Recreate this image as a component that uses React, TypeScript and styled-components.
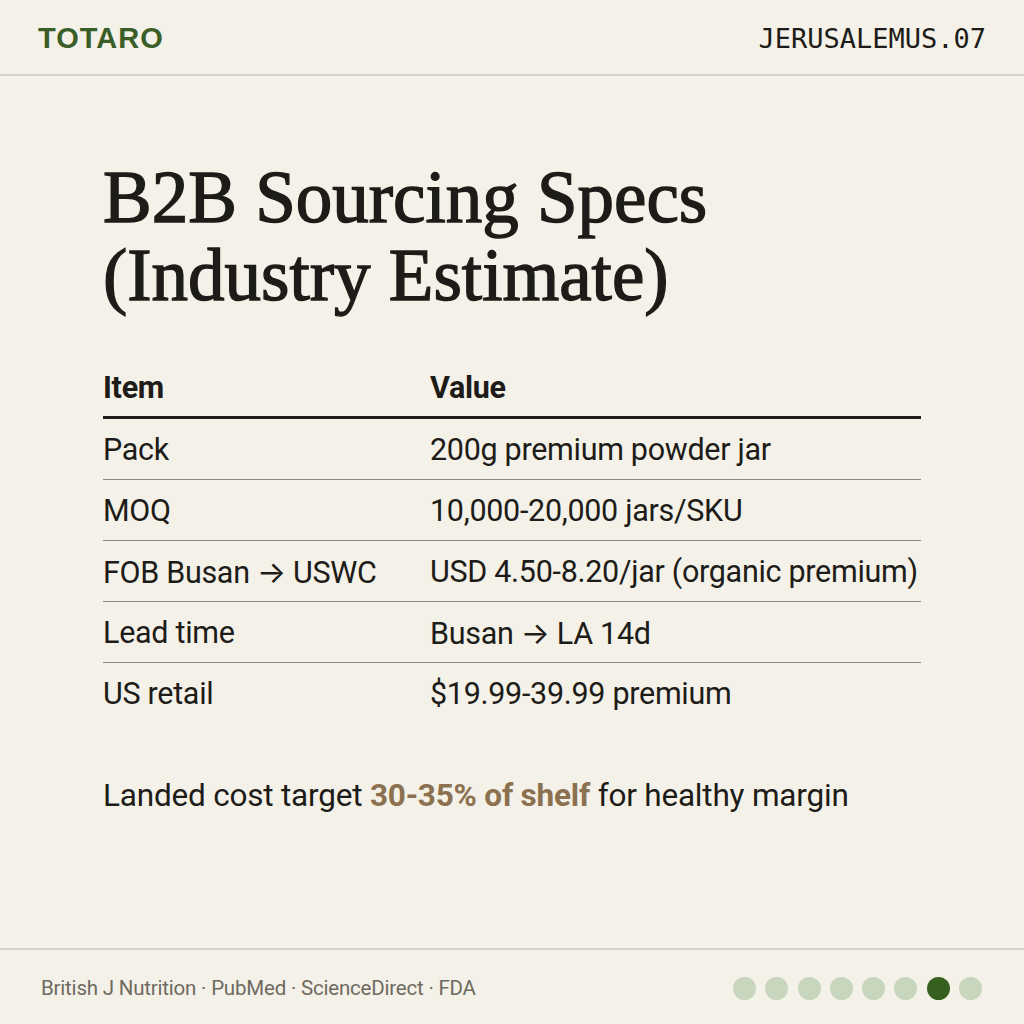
import React from "react";
import styled, { createGlobalStyle } from "styled-components";

const Global = createGlobalStyle`
  html, body { margin: 0; padding: 0; background: #f4f1e8; }
  body { font-family: Roboto, Inter, "Noto Sans", sans-serif; }
`;

const Page = styled.div`
  width: 1024px;
  height: 1024px;
  box-sizing: border-box;
  display: flex;
  flex-direction: column;
  background: #f4f1e8;
  color: #1d1c18;
`;

const Header = styled.header`
  height: 76px;
  box-sizing: border-box;
  display: flex;
  align-items: center;
  justify-content: space-between;
  padding: 2px 38px 0 38px;
  border-bottom: 2px solid #d6d3c9;
`;

const Brand = styled.div`
  font-family: "Liberation Sans", Arial, sans-serif;
  font-weight: 700;
  font-size: 29px;
  color: #3a5e27;
  letter-spacing: 1px;
`;

const Code = styled.div`
  font-family: "DejaVu Sans Mono", "Liberation Mono", monospace;
  font-size: 27px;
  color: #1d1c18;
`;

const Main = styled.main`
  flex: 1;
  display: flex;
  flex-direction: column;
  padding: 83px 103px 0 103px;
`;

const Title = styled.h1`
  margin: 0;
  font-family: "Liberation Serif", serif;
  font-weight: 400;
  font-size: 73px;
  line-height: 78px;
  color: #1d1c18;
  -webkit-text-stroke: 1.4px #1d1c18;
`;

const Table = styled.div`
  margin-top: 43px;
  width: 818px;
  display: flex;
  flex-direction: column;
`;

const Row = styled.div<{ $head?: boolean }>`
  display: grid;
  grid-template-columns: 327px 1fr;
  align-items: center;
  height: ${(p) => (p.$head ? "58px" : "60px")};
  border-bottom: ${(p) => (p.$head ? "3px solid #1d1c18" : "1px solid #8e8b82")};
  font-family: Roboto, Inter, sans-serif;
  font-size: 30.5px;
  font-weight: ${(p) => (p.$head ? 700 : 400)};
  letter-spacing: -0.3px;
  color: #1d1c18;
  &:last-child { border-bottom: none; }
`;

const Note = styled.p`
  margin: 54px 0 0 0;
  font-family: Roboto, Inter, sans-serif;
  font-size: 31.5px;
  letter-spacing: -0.2px;
  color: #1d1c18;
`;

const Accent = styled.span`
  font-weight: 700;
  color: #8b7150;
`;

const Footer = styled.footer`
  height: 76px;
  box-sizing: border-box;
  border-top: 2px solid #d6d3c9;
  display: flex;
  align-items: center;
  justify-content: space-between;
  padding: 2px 42px 0 41px;
`;

const Sources = styled.div`
  font-family: Roboto, Inter, sans-serif;
  font-size: 20.5px;
  letter-spacing: -0.2px;
  color: #6e6a60;
`;

const Dots = styled.div`
  display: flex;
  gap: 9.3px;
`;

const Dot = styled.span<{ $active?: boolean }>`
  width: 23px;
  height: 23px;
  border-radius: 50%;
  background: ${(p) => (p.$active ? "#37601f" : "#c7d6bc")};
`;

const rows: [string, string][] = [
  ["Pack", "200g premium powder jar"],
  ["MOQ", "10,000-20,000 jars/SKU"],
  ["FOB Busan → USWC", "USD 4.50-8.20/jar (organic premium)"],
  ["Lead time", "Busan → LA 14d"],
  ["US retail", "$19.99-39.99 premium"],
];

export default function App() {
  return (
    <Page>
      <Global />
      <Header>
        <Brand>TOTARO</Brand>
        <Code>JERUSALEMUS.07</Code>
      </Header>
      <Main>
        <Title>
          B2B Sourcing Specs
          <br />
          (Industry Estimate)
        </Title>
        <Table>
          <Row $head>
            <span>Item</span>
            <span>Value</span>
          </Row>
          {rows.map(([k, v]) => (
            <Row key={k}>
              <span>{k}</span>
              <span>{v}</span>
            </Row>
          ))}
        </Table>
        <Note>
          Landed cost target <Accent>30-35% of shelf</Accent> for healthy margin
        </Note>
      </Main>
      <Footer>
        <Sources>British J Nutrition · PubMed · ScienceDirect · FDA</Sources>
        <Dots>
          {Array.from({ length: 8 }).map((_, i) => (
            <Dot key={i} $active={i === 6} />
          ))}
        </Dots>
      </Footer>
    </Page>
  );
}
